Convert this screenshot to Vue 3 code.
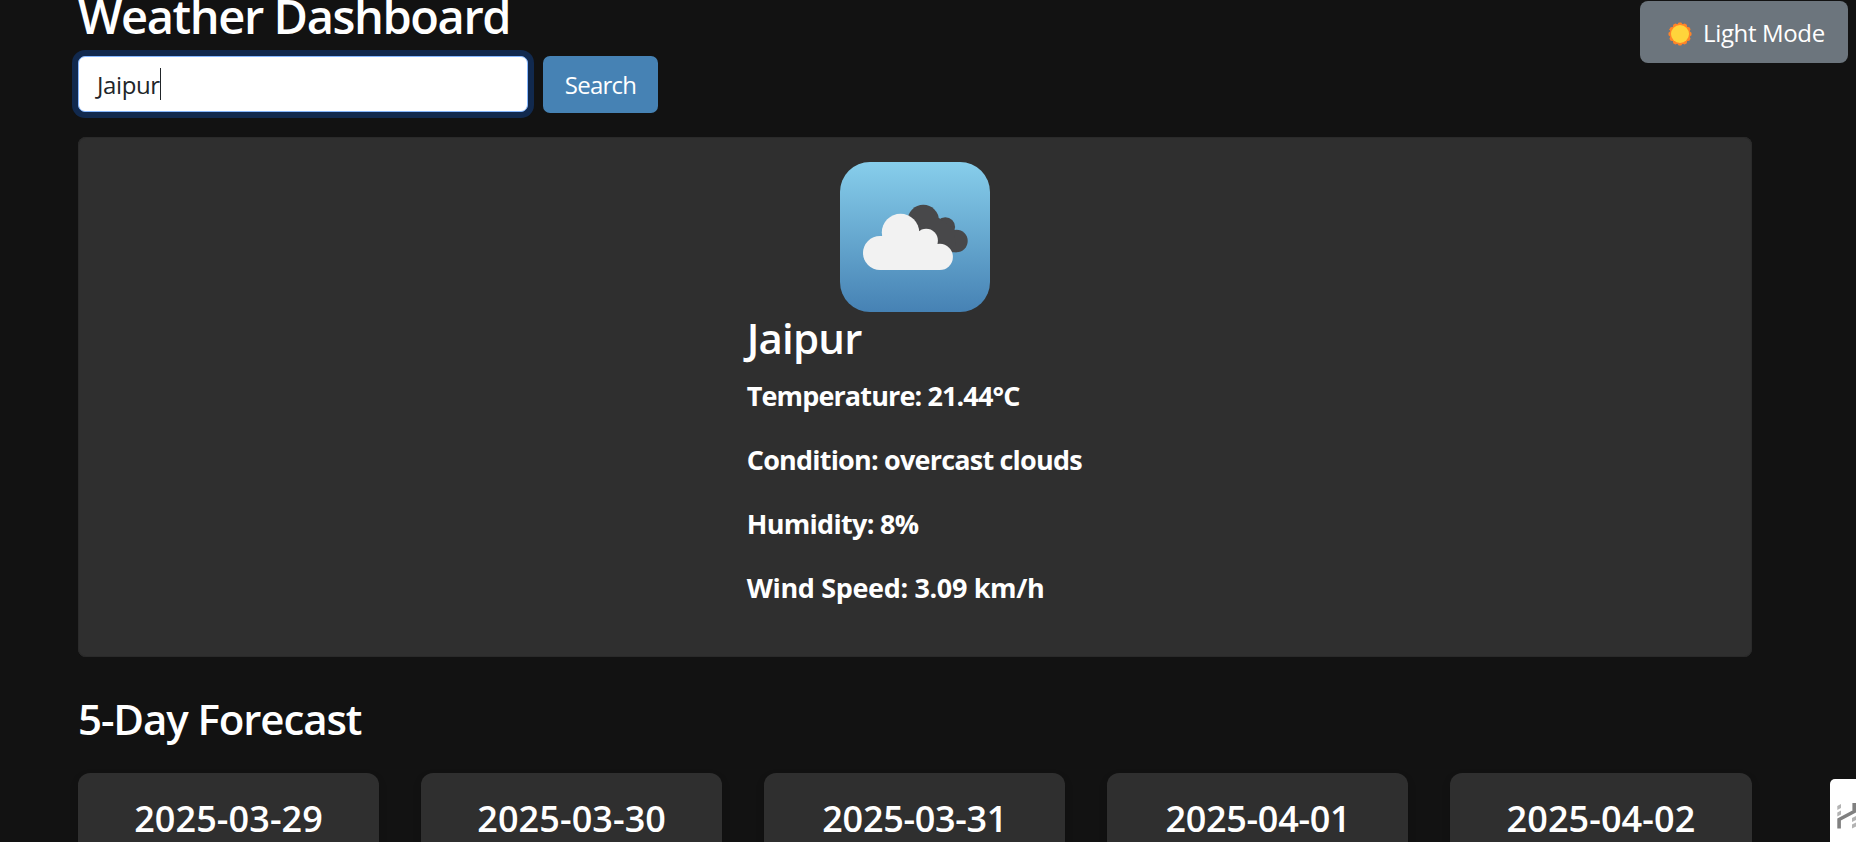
<script setup>
import { ref } from 'vue'

const city = ref('Jaipur')
const details = [
  { text: 'Temperature: 21.44°C', cls: 'temperature' },
  { text: 'Condition: overcast clouds', cls: 'condition' },
  { text: 'Humidity: 8%', cls: 'humidity' },
  { text: 'Wind Speed: 3.09 km/h', cls: 'wind' },
]
const days = ['2025-03-29', '2025-03-30', '2025-03-31', '2025-04-01', '2025-04-02']
</script>

<template>
  <div class="page">
    <main class="container">
      <h1><span>Weather Dashboard</span></h1>
      <div class="search-row">
        <div class="field"><span>{{ city }}</span><i class="caret"></i></div>
        <button class="search"><span>Search</span></button>
      </div>

      <section class="current">
        <svg class="weather-icon" width="150" height="150" viewBox="0 0 150 150">
          <defs>
            <linearGradient id="sky" x1="0" y1="0" x2="0" y2="1">
              <stop offset="0" stop-color="#87ceeb" />
              <stop offset="1" stop-color="#4682b4" />
            </linearGradient>
          </defs>
          <rect width="150" height="150" rx="30" fill="url(#sky)" />
          <g fill="#48484a">
            <circle cx="83.3" cy="58.5" r="15.7" />
            <circle cx="105.3" cy="65" r="9.8" />
            <circle cx="116.5" cy="79" r="11.2" />
            <path d="M83 56H99L114 67L116.5 90.2H95L75 75Z" />
          </g>
          <g fill="#f2f2f2">
            <circle cx="40" cy="91" r="17" />
            <circle cx="60.5" cy="70.5" r="18.7" />
            <circle cx="86.2" cy="78.5" r="11.7" />
            <circle cx="99.8" cy="94.9" r="13.1" />
            <path d="M40 74H42L60 66L79 69L97.5 82L100 82V108H40Z" />
          </g>
        </svg>
        <div class="info">
          <h2><span>Jaipur</span></h2>
          <p v-for="d in details" :key="d.cls"><span :class="d.cls">{{ d.text }}</span></p>
        </div>
      </section>

      <h2 class="forecast-title"><span>5-Day Forecast</span></h2>
      <section class="forecast">
        <article v-for="day in days" :key="day" class="day">
          <h3 :class="{ narrow: day.endsWith('1') }">{{ day }}</h3>
        </article>
      </section>
    </main>

    <button class="mode">
      <svg width="24" height="24" viewBox="-12 -12 24 24">
        <g fill="#ff8428">
          <path v-for="n in 12" :key="n" d="M-3.6 -8.5L-1.2 -11.5H1.2L3.6 -8.5L0 0Z" :transform="`rotate(${(n - 1) * 30})`" />
        </g>
        <circle r="9" fill="#ffd43b" />
      </svg>
      <span>Light Mode</span>
    </button>

    <aside class="widget">
      <svg width="26" height="63" viewBox="0 0 26 63">
        <g fill="#b3b3b3">
          <path d="M7.3 27L11 25V29L7.3 31Z" />
          <path d="M7.3 33.5L11 31.5V35.5L7.3 37.5Z" />
          <path d="M22 39L26 37V41L22 43Z" />
          <path d="M22 45.5L26 43.5V47.5L22 49.5Z" />
        </g>
        <path d="M9.1 49.5V40.5L24.2 32.5V24" fill="none" stroke="#808080" stroke-width="3.6" />
      </svg>
    </aside>
  </div>
</template>

<style>
html, body { margin: 0; background: #121212; overflow: hidden; }
</style>

<style scoped>
* { box-sizing: border-box; }
.page {
  position: relative;
  height: 842px;
  overflow: hidden;
  background: #121212;
  color: #fff;
  font-family: "Open Sans", "Noto Sans", sans-serif;
}
.container { width: 1673.5px; margin-left: 78px; }
h1, h2, h3, p { margin: 0; white-space: nowrap; }
h1 { height: 56px; font-size: 47px; line-height: 33px; font-weight: 600; letter-spacing: -1.4px; }
.search-row { display: flex; gap: 15px; height: 57px; }
.field {
  display: flex;
  align-items: center;
  width: 450px;
  height: 56px;
  padding-left: 18px;
  border: 1px solid #86b7fe;
  border-radius: 7px;
  background: #fff;
  color: #212529;
  font-size: 24px;
  box-shadow: 0 0 0 6px #11294e;
}
.field span { letter-spacing: -0.4px; }
.caret { width: 1px; height: 32px; margin-top: -1px; background: #212529; }
button { border: 0; padding: 0; color: #fff; font-family: inherit; }
.search { width: 115px; border-radius: 7px; background: #4682b4; font-size: 24px; letter-spacing: -0.75px; }
.current {
  display: flex;
  flex-direction: column;
  align-items: center;
  height: 519.5px;
  margin-top: 24px;
  padding-top: 25px;
  border-radius: 8px;
  background: #2f2f2f;
  box-shadow: inset 0 0 0 1px #2a2a2a;
}
.weather-icon { flex: none; display: block; }
.info { width: 336px; }
h2 { font-size: 42px; font-weight: 600; line-height: 52px; letter-spacing: -0.8px; }
.info h2 { height: 58.5px; }
.info p { height: 64.3px; font-size: 27px; font-weight: 700; line-height: 50px; letter-spacing: -0.7px; }
.info .temperature { letter-spacing: -0.88px; }
.info .condition { letter-spacing: -0.8px; }
.info .wind { letter-spacing: -0.35px; }
.forecast-title { margin-top: 36.5px; line-height: 52px; letter-spacing: -1.1px; }
.forecast { display: grid; grid-template-columns: repeat(5, 1fr); gap: 42px; margin-top: 28px; }
.day {
  height: 160px;
  padding-top: 21px;
  border-radius: 12px;
  background: #2f2f2f;
  text-align: center;
  box-shadow: 0 4px 8px rgba(0, 0, 0, .15);
}
h3 { font-size: 36px; font-weight: 600; line-height: 50px; letter-spacing: 0.1px; }
h3.narrow { letter-spacing: -0.3px; }
.mode {
  position: absolute;
  top: 1px;
  left: 1640px;
  display: flex;
  align-items: center;
  width: 208px;
  height: 62px;
  padding-left: 28px;
  border-radius: 8px;
  background: #6c757d;
  font-size: 24px;
  letter-spacing: -0.35px;
}
.mode svg { margin: 3px 11px 0 0; flex: none; }
.mode span { white-space: nowrap; }
.widget {
  position: absolute;
  top: 779px;
  right: 0;
  width: 26px;
  height: 63px;
  border-radius: 5px 0 0 0;
  background: #fff;
}
</style>
